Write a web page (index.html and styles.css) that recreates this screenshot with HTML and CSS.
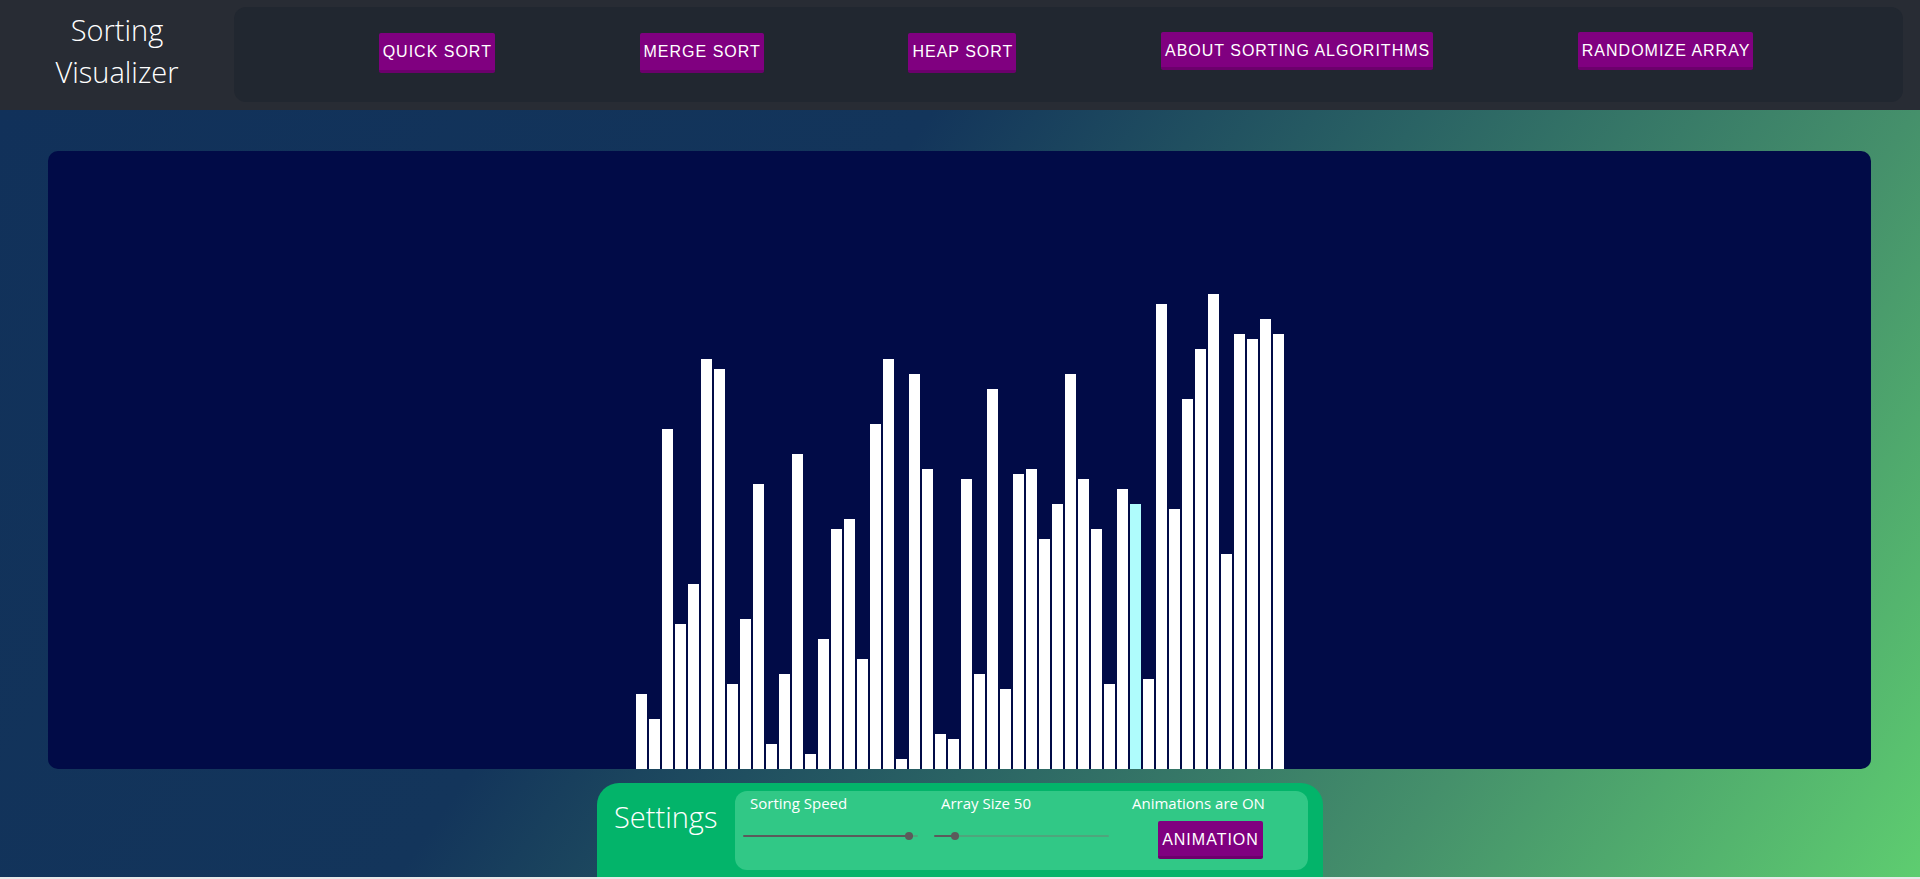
FILE: index.html
```html
<!DOCTYPE html>
<html lang="en">
<head>
<meta charset="utf-8">
<title>Sorting Visualizer</title>
<link rel="stylesheet" href="styles.css">
</head>
<body>
<div class="app">
  <header class="header">
    <div class="brand">Sorting<br>Visualizer</div>
    <nav class="nav">
      <button class="btn">QUICK SORT</button>
      <button class="btn">MERGE SORT</button>
      <button class="btn">HEAP SORT</button>
      <button class="btn btn-up">ABOUT SORTING ALGORITHMS</button>
      <button class="btn btn-up">RANDOMIZE ARRAY</button>
    </nav>
  </header>
  <main class="main">
    <section class="chart">
      <div class="bars">
        <div class="bar" style="height:75px"></div>
        <div class="bar" style="height:50px"></div>
        <div class="bar" style="height:340px"></div>
        <div class="bar" style="height:145px"></div>
        <div class="bar" style="height:185px"></div>
        <div class="bar" style="height:410px"></div>
        <div class="bar" style="height:400px"></div>
        <div class="bar" style="height:85px"></div>
        <div class="bar" style="height:150px"></div>
        <div class="bar" style="height:285px"></div>
        <div class="bar" style="height:25px"></div>
        <div class="bar" style="height:95px"></div>
        <div class="bar" style="height:315px"></div>
        <div class="bar" style="height:15px"></div>
        <div class="bar" style="height:130px"></div>
        <div class="bar" style="height:240px"></div>
        <div class="bar" style="height:250px"></div>
        <div class="bar" style="height:110px"></div>
        <div class="bar" style="height:345px"></div>
        <div class="bar" style="height:410px"></div>
        <div class="bar" style="height:10px"></div>
        <div class="bar" style="height:395px"></div>
        <div class="bar" style="height:300px"></div>
        <div class="bar" style="height:35px"></div>
        <div class="bar" style="height:30px"></div>
        <div class="bar" style="height:290px"></div>
        <div class="bar" style="height:95px"></div>
        <div class="bar" style="height:380px"></div>
        <div class="bar" style="height:80px"></div>
        <div class="bar" style="height:295px"></div>
        <div class="bar" style="height:300px"></div>
        <div class="bar" style="height:230px"></div>
        <div class="bar" style="height:265px"></div>
        <div class="bar" style="height:395px"></div>
        <div class="bar" style="height:290px"></div>
        <div class="bar" style="height:240px"></div>
        <div class="bar" style="height:85px"></div>
        <div class="bar" style="height:280px"></div>
        <div class="bar bar-active" style="height:265px"></div>
        <div class="bar" style="height:90px"></div>
        <div class="bar" style="height:465px"></div>
        <div class="bar" style="height:260px"></div>
        <div class="bar" style="height:370px"></div>
        <div class="bar" style="height:420px"></div>
        <div class="bar" style="height:475px"></div>
        <div class="bar" style="height:215px"></div>
        <div class="bar" style="height:435px"></div>
        <div class="bar" style="height:430px"></div>
        <div class="bar" style="height:450px"></div>
        <div class="bar" style="height:435px"></div>
      </div>
    </section>
    <section class="settings">
      <div class="settings-title">Settings</div>
      <div class="settings-body">
        <div class="setting">
          <label class="setting-label" for="speed">Sorting Speed</label>
          <input id="speed" class="slider" type="range" min="0" max="100" value="97" style="background:linear-gradient(to right,#5b5b5b 0,#5b5b5b 97%,#4fa57c 97%)">
        </div>
        <div class="setting">
          <label class="setting-label" for="size">Array Size 50</label>
          <input id="size" class="slider" type="range" min="0" max="100" value="10" style="background:linear-gradient(to right,#5b5b5b 0,#5b5b5b 12%,#4fa57c 12%)">
        </div>
        <div class="setting">
          <div class="setting-label">Animations are ON</div>
          <button class="btn btn-anim">ANIMATION</button>
        </div>
      </div>
    </section>
  </main>
</div>
</body>
</html>
```

FILE: styles.css
```css
* { box-sizing: border-box; }

html, body {
  margin: 0;
  padding: 0;
}

body {
  background: #e8e8e8;
  font-family: "Open Sans", "Noto Sans", sans-serif;
  color: #fff;
  overflow: hidden;
}

.app {
  display: flex;
  flex-direction: column;
  height: 877px;
}

.header {
  display: flex;
  height: 110px;
  background: #282c34;
  flex: 0 0 auto;
}

.brand {
  flex: 0 0 234px;
  display: flex;
  align-items: center;
  justify-content: center;
  text-align: center;
  font-weight: 300;
  font-size: 29px;
  line-height: 42px;
  padding-bottom: 8px;
  color: #fff;
}

.nav {
  flex: 1 1 auto;
  margin: 7px 17px 8px 0;
  background: #212730;
  border-radius: 12px;
  display: flex;
  align-items: center;
  justify-content: space-evenly;
  padding: 0 5px 4px 0;
}

.btn {
  font-family: "Liberation Sans", Arial, sans-serif;
  font-size: 16px;
  letter-spacing: 1px;
  color: #fff;
  background: #800080;
  border: none;
  border-bottom: 3px solid #6c006c;
  border-radius: 2px;
  height: 40px;
  padding: 2px 3px 0 4px;
  cursor: pointer;
}

.btn-up {
  height: 38px;
  margin-bottom: 3px;
}

.main {
  flex: 1 1 auto;
  display: flex;
  flex-direction: column;
  align-items: center;
  padding-top: 41px;
  background: linear-gradient(125deg, #11315a 0%, #13355b 38%, #2a6364 58%, #45906b 78%, #5ecd70 100%);
}

.chart {
  align-self: stretch;
  margin: 0 49px 0 48px;
  height: 618px;
  background: #010b47;
  border-radius: 10px;
  display: flex;
  justify-content: center;
  align-items: flex-end;
}

.bars {
  display: flex;
  align-items: flex-end;
  height: 100%;
}

.bar {
  width: 11px;
  margin: 0 1px;
  background: #ffffff;
}

.bar-active {
  background: #affcfc;
}

.settings {
  margin-top: 14px;
  width: 726px;
  height: 94px;
  background: #03b46a;
  border-radius: 22px 22px 0 0;
  display: flex;
  padding: 8px 15px 7px 17px;
}

.settings-title {
  flex: 0 0 121px;
  font-weight: 300;
  font-size: 29px;
  line-height: 40px;
  padding-top: 6px;
}

.settings-body {
  flex: 1 1 auto;
  background: #31c886;
  border-radius: 12px;
  display: flex;
  gap: 16px;
  padding: 0 8px;
}

.setting {
  flex: 0 0 175px;
  display: flex;
  flex-direction: column;
  align-items: flex-start;
}

.setting-label {
  font-size: 15px;
  line-height: 20px;
  padding: 2px 0 0 7px;
  color: #fff;
}

.slider {
  -webkit-appearance: none;
  appearance: none;
  width: 175px;
  height: 2px;
  margin: 22px 0 0 0;
  padding: 0;
  border-radius: 1px;
  outline: none;
}

.slider::-webkit-slider-thumb {
  -webkit-appearance: none;
  appearance: none;
  width: 8px;
  height: 8px;
  border-radius: 50%;
  background: #5b5b5b;
  border: none;
}

.btn-anim {
  align-self: center;
  margin-top: 8px;
  margin-left: -4px;
  height: 38px;
  padding: 2px 4px 0 4px;
}
```
